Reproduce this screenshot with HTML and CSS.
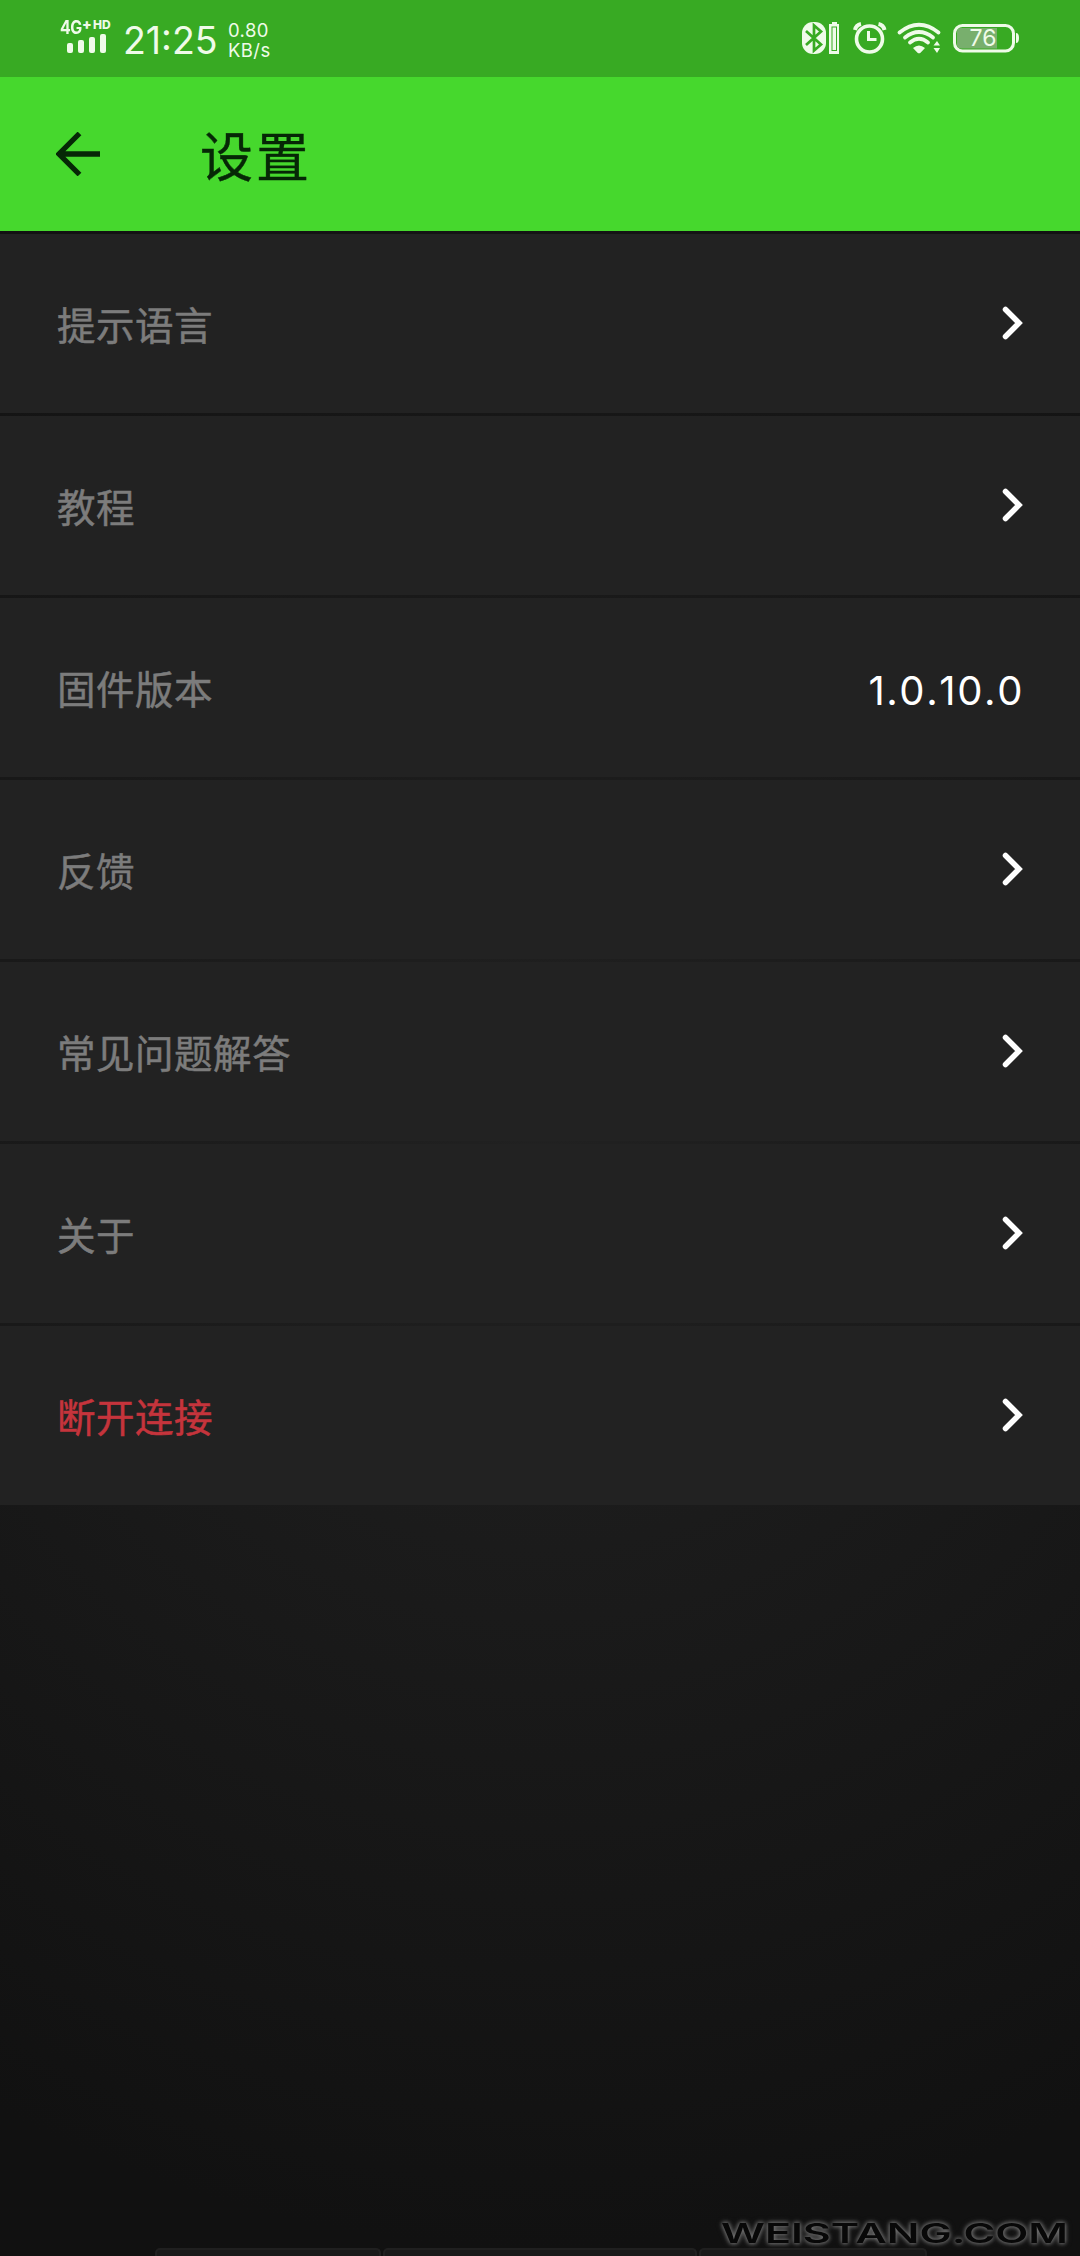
FILE: index.html
```html
<!DOCTYPE html>
<html lang="zh-CN">
<head>
<meta charset="utf-8">
<title>设置</title>
<link rel="stylesheet" href="styles.css">
</head>
<body>
<div class="screen">
  <div class="status">
    <div class="signal">
      <div class="network"><span class="generation">4G</span><span class="plus">+</span><span class="hd">HD</span></div>
      <svg class="bars" width="40" height="19" viewBox="0 0 40 19"><g fill="#effbe9"><rect x="0" y="9" width="6" height="10" rx="2"/><rect x="11" y="6" width="6" height="13" rx="2"/><rect x="22" y="3" width="6" height="16" rx="2"/><rect x="33" y="0" width="6" height="19" rx="2"/></g></svg>
    </div>
    <div class="clock">21:25</div>
    <div class="speed"><span>0.80</span><span>KB/s</span></div>
    <svg class="icons" width="260" height="80" viewBox="0 0 260 80">
      <rect x="22" y="22" width="24" height="32" rx="11" fill="#effbe9"/>
      <path d="M26 31 L41 44.5 L34 50.5 V25.5 L41 31.5 L26 45" fill="none" stroke="#38aa23" stroke-width="2.700"/>
      <path d="M52 22h5v2h2v30h-10V24h3z" fill="#effbe9"/>
      <rect x="52" y="27" width="4.500" height="23.500" fill="none" stroke="#38aa23" stroke-width="1"/>
      <g fill="none" stroke="#effbe9">
        <circle cx="89.500" cy="39" r="13" stroke-width="3.600"/>
        <path d="M88.500 31v8.500h8" stroke-width="3"/>
        <path d="M75 30q1-5 6-6M104.500 30q-1-5-6-6" stroke-width="4"/>
        <path d="M119.500 32.500Q139 17 158.500 32.500M125 37.500Q139 26.500 153 37.500M130 42.500Q139 35 148 42.500" stroke-width="3.800" stroke-linecap="round"/>
        <rect x="174.500" y="25.500" width="59" height="25.500" rx="8" stroke-width="3"/>
      </g>
      <path d="M133 48q6-5 12 0l-4.500 4.700q-1.500 1-3 0zM157 41l3 4.500h-6.500zM157 53l3-5h-6.500zM236 33q3 0 3 5t-3 5z" fill="#effbe9"/>
      <path d="M181 28h36v20.500h-36q-4 0-4-4v-12.500q0-4 4-4z" fill="#78af6d"/>
      <text class="level" x="203" y="46" text-anchor="middle">76</text>
    </svg>
  </div>
  <header class="header">
    <svg class="back" width="44" height="44" viewBox="0 0 44 44"><path d="M44 22H4M23.500 1.500L3 22L23.500 42.500" fill="none" stroke="#062706" stroke-width="5.300"/></svg>
    <h1 class="title">设置</h1>
  </header>
  <main class="list">
    <div class="row"><span>提示语言</span><svg class="chevron" viewBox="0 0 22 34"><path d="M3.500 3.500L17 17L3.500 30.500"/></svg></div>
    <div class="row"><span>教程</span><svg class="chevron" viewBox="0 0 22 34"><path d="M3.500 3.500L17 17L3.500 30.500"/></svg></div>
    <div class="row"><span>固件版本</span><span class="version">1.0.10.0</span></div>
    <div class="row"><span>反馈</span><svg class="chevron" viewBox="0 0 22 34"><path d="M3.500 3.500L17 17L3.500 30.500"/></svg></div>
    <div class="row"><span>常见问题解答</span><svg class="chevron" viewBox="0 0 22 34"><path d="M3.500 3.500L17 17L3.500 30.500"/></svg></div>
    <div class="row"><span>关于</span><svg class="chevron" viewBox="0 0 22 34"><path d="M3.500 3.500L17 17L3.500 30.500"/></svg></div>
    <div class="row danger"><span>断开连接</span><svg class="chevron" viewBox="0 0 22 34"><path d="M3.500 3.500L17 17L3.500 30.500"/></svg></div>
  </main>
  <div class="keys"><i></i><i></i><i></i></div>
  <svg class="watermark" width="380" height="46" viewBox="0 0 380 46"><text x="21" y="32.500" textLength="347" lengthAdjust="spacingAndGlyphs">WEISTANG.COM</text></svg>
</div>
</body>
</html>
```
FILE: styles.css
```css
* { box-sizing: border-box; }
body { margin: 0; background: #111; font-family: Inter, "Noto Sans CJK SC", sans-serif; }
.screen {
  position: relative;
  display: flex;
  flex-direction: column;
  width: 1080px;
  height: 2256px;
  overflow: hidden;
  background: radial-gradient(circle 1120px at 540px 1128px, #212121, #111);
}
.status { display: flex; height: 77px; padding-left: 60px; background: #38aa23; color: #effbe9; }
.signal { width: 63px; padding-top: 18px; }
.network { display: flex; height: 16px; font: 700 17px/19px Inter, sans-serif; }
.generation { width: 22px; font-size: 18.5px; letter-spacing: -0.5px; transform: scaleX(0.86); transform-origin: left; }
.network .plus { width: 9px; font-size: 14px; line-height: 11px; font-weight: 900; }
.network .hd { margin-left: 2px; font-size: 12px; line-height: 13px; font-weight: 800; }
.bars { display: block; margin-left: 7px; }
.clock { width: 105px; padding-top: 22px; font-size: 37.5px; line-height: 38px; }
.speed { display: flex; flex-direction: column; width: 60px; padding-top: 20px; font-size: 18.5px; line-height: 20px; letter-spacing: 0.4px; }
.icons { margin-left: 492px; }
.level { font: 23px Inter, sans-serif; fill: #effbe9; }
.header { display: flex; align-items: center; height: 154px; padding-left: 56px; background: #46d82d; color: #062706; }
.title { margin: 8px 0 0 100px; font-size: 53px; font-weight: 400; letter-spacing: 3px; line-height: 80px; -webkit-text-stroke: 0.4px; }
.list { display: flex; flex-direction: column; gap: 3px; padding-top: 3px; }
.row { display: flex; align-items: center; justify-content: space-between; height: 179px; padding: 0 56px 2px 57px; background: #222; color: #7c7c7c; font-size: 38.5px; letter-spacing: 0.5px; -webkit-text-stroke: 0.5px; }
.danger { color: #c5343c; }
.version { padding-top: 8px; color: #fff; font-size: 40px; letter-spacing: 1.6px; font-kerning: none; -webkit-text-stroke: 0; }
.chevron { width: 22px; height: 34px; fill: none; stroke: #fff; stroke-width: 5.5; stroke-linecap: round; }
.keys { display: grid; grid-template-columns: 226px 314px 228px; gap: 2px; height: 8px; margin: auto 0 0 155px; }
.keys i { border: 2px solid #202020; border-bottom: 0; border-radius: 5px 5px 0 0; background: #191919; }
.watermark { position: absolute; left: 700px; top: 2210px; filter: drop-shadow(0 0 2px #777) drop-shadow(0 0 2px #555); }
.watermark text { font: 600 27px Inter, sans-serif; fill: #080808; }
```
